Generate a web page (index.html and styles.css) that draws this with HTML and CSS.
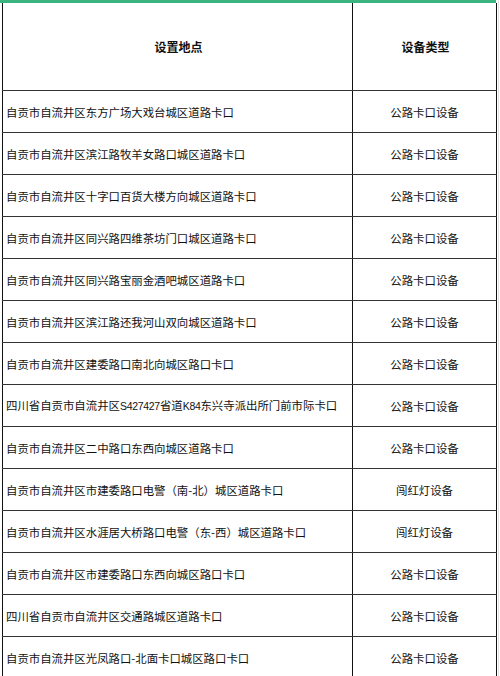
FILE: index.html
```html
<!DOCTYPE html>
<html lang="zh">
<head>
<meta charset="utf-8">
<link rel="stylesheet" href="styles.css">
</head>
<body>
<div class="sheet">
  <div class="topbar"></div>
  <table class="grid">
    <colgroup><col class="c1"><col class="c2"></colgroup>
    <thead>
      <tr class="head"><th>设置地点</th><th>设备类型</th></tr>
    </thead>
    <tbody>
      <tr><td class="loc">自贡市自流井区东方广场大戏台城区道路卡口</td><td>公路卡口设备</td></tr>
      <tr><td class="loc">自贡市自流井区滨江路牧羊女路口城区道路卡口</td><td>公路卡口设备</td></tr>
      <tr><td class="loc">自贡市自流井区十字口百货大楼方向城区道路卡口</td><td>公路卡口设备</td></tr>
      <tr><td class="loc">自贡市自流井区同兴路四维茶坊门口城区道路卡口</td><td>公路卡口设备</td></tr>
      <tr><td class="loc">自贡市自流井区同兴路宝丽金酒吧城区道路卡口</td><td>公路卡口设备</td></tr>
      <tr><td class="loc">自贡市自流井区滨江路还我河山双向城区道路卡口</td><td>公路卡口设备</td></tr>
      <tr><td class="loc">自贡市自流井区建委路口南北向城区路口卡口</td><td>公路卡口设备</td></tr>
      <tr><td class="loc">四川省自贡市自流井区<span class="latin">S427427</span>省道<span class="latin">K84</span>东兴寺派出所门前市际卡口</td><td>公路卡口设备</td></tr>
      <tr><td class="loc">自贡市自流井区二中路口东西向城区道路卡口</td><td>公路卡口设备</td></tr>
      <tr><td class="loc">自贡市自流井区市建委路口电警（南-北）城区道路卡口</td><td>闯红灯设备</td></tr>
      <tr><td class="loc">自贡市自流井区水涯居大桥路口电警（东-西）城区道路卡口</td><td>闯红灯设备</td></tr>
      <tr><td class="loc">自贡市自流井区市建委路口东西向城区路口卡口</td><td>公路卡口设备</td></tr>
      <tr><td class="loc">四川省自贡市自流井区交通路城区道路卡口</td><td>公路卡口设备</td></tr>
      <tr><td class="loc">自贡市自流井区光凤路口-北面卡口城区路口卡口</td><td>公路卡口设备</td></tr>
    </tbody>
  </table>
</div>
</body>
</html>
```
FILE: styles.css
```css
html, body {
  margin: 0;
  padding: 0;
  background: #ffffff;
}
body {
  font-family: "Noto Sans CJK SC", "Liberation Sans", sans-serif;
  font-size: 11.4px;
  color: #111;
  overflow: hidden;
}
.sheet {
  width: 498px;
  border-right: 1px solid #e2e2e2;
  min-height: 676px;
}
.topbar {
  width: 496px;
  height: 3px;
  background: #3bb482;
}
.grid {
  margin-left: 2px;
  width: 494px;
  border-collapse: collapse;
  table-layout: fixed;
  border-right: 1px solid #111;
}
.c1 { width: 350px; }
.c2 { width: 144px; }
.grid th, .grid td {
  border-left: 1px solid #111;
  border-bottom: 1px solid #333;
  padding: 0;
  line-height: 14px;
  white-space: nowrap;
  overflow: hidden;
}
.head th {
  height: 87px;
  font-weight: bold;
  font-size: 12px;
  text-align: center;
  vertical-align: middle;
  padding-left: 2px;
}
.grid td {
  height: 41px;
  text-align: center;
  vertical-align: middle;
}
.grid td.loc {
  text-align: left;
  padding-left: 3px;
}
.latin {
  font-family: "Liberation Sans", sans-serif;
  font-size: 10.5px;
  letter-spacing: -0.3px;
}
```
